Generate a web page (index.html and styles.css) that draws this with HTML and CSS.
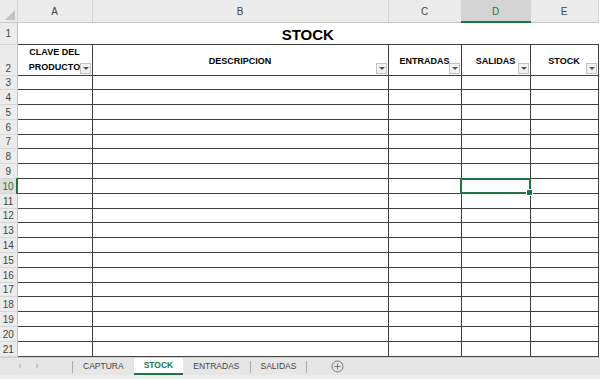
FILE: index.html
```html
<!DOCTYPE html>
<html lang="es">
<head>
    <meta charset="UTF-8">
    <title>STOCK</title>
    <link rel="stylesheet" href="styles.css">
</head>
<body>
<div class="sheet">
    <table class="grid">
        <colgroup>
            <col class="c-rh">
            <col class="c-a">
            <col class="c-b">
            <col class="c-c">
            <col class="c-d">
            <col class="c-e">
        </colgroup>
        <tr class="r-head">
            <th class="corner"><i></i></th>
            <th>A</th>
            <th>B</th>
            <th>C</th>
            <th class="sel">D</th>
            <th>E</th>
        </tr>
        <tr class="r-title">
            <th class="rh">1</th>
            <td colspan="5" class="title">STOCK</td>
        </tr>
        <tr class="r-cols">
            <th class="rh">2</th>
            <td class="hd two"><span>CLAVE DEL<br>PRODUCTO</span><i class="flt"></i></td>
            <td class="hd"><span>DESCRIPCION</span><i class="flt"></i></td>
            <td class="hd"><span>ENTRADAS</span><i class="flt"></i></td>
            <td class="hd"><span>SALIDAS</span><i class="flt"></i></td>
            <td class="hd"><span>STOCK</span><i class="flt"></i></td>
        </tr>
        <tr><th class="rh">3</th><td></td><td></td><td></td><td></td><td></td></tr>
        <tr><th class="rh">4</th><td></td><td></td><td></td><td></td><td></td></tr>
        <tr><th class="rh">5</th><td></td><td></td><td></td><td></td><td></td></tr>
        <tr><th class="rh">6</th><td></td><td></td><td></td><td></td><td></td></tr>
        <tr><th class="rh">7</th><td></td><td></td><td></td><td></td><td></td></tr>
        <tr><th class="rh">8</th><td></td><td></td><td></td><td></td><td></td></tr>
        <tr><th class="rh">9</th><td></td><td></td><td></td><td></td><td></td></tr>
        <tr><th class="rh sel">10</th><td></td><td></td><td></td><td class="active"></td><td></td></tr>
        <tr><th class="rh">11</th><td></td><td></td><td></td><td></td><td></td></tr>
        <tr><th class="rh">12</th><td></td><td></td><td></td><td></td><td></td></tr>
        <tr><th class="rh">13</th><td></td><td></td><td></td><td></td><td></td></tr>
        <tr><th class="rh">14</th><td></td><td></td><td></td><td></td><td></td></tr>
        <tr><th class="rh">15</th><td></td><td></td><td></td><td></td><td></td></tr>
        <tr><th class="rh">16</th><td></td><td></td><td></td><td></td><td></td></tr>
        <tr><th class="rh">17</th><td></td><td></td><td></td><td></td><td></td></tr>
        <tr><th class="rh">18</th><td></td><td></td><td></td><td></td><td></td></tr>
        <tr><th class="rh">19</th><td></td><td></td><td></td><td></td><td></td></tr>
        <tr><th class="rh">20</th><td></td><td></td><td></td><td></td><td></td></tr>
        <tr><th class="rh">21</th><td></td><td></td><td></td><td></td><td></td></tr>
    </table>

    <div class="tabs">
        <div class="nav"><i class="arr-l"></i><i class="arr-r"></i></div>
        <span class="sep"></span>
        <span class="tab">CAPTURA</span>
        <span class="tab on">STOCK</span>
        <span class="tab">ENTRADAS</span>
        <span class="sep"></span>
        <span class="tab">SALIDAS</span>
        <span class="sep"></span>
        <svg class="add" width="13" height="13" viewBox="0 0 13 13">
            <circle cx="6.5" cy="6.5" r="5.5" fill="none" stroke="#777" stroke-width="1"/>
            <path d="M6.5 3.5v6M3.5 6.5h6" stroke="#777" stroke-width="1"/>
        </svg>
    </div>
</div>
</body>
</html>
```

FILE: styles.css
```css
*{
    padding: 0;
    margin: 0;
    box-sizing: border-box;
}
body{
    width: 600px;
    height: 379px;
    overflow: hidden;
    background: #fff;
    font-family: "Liberation Sans", Arial, sans-serif;
}
.sheet{
    display: flex;
    flex-direction: column;
    height: 379px;
}

/* grid */
.grid{
    border-collapse: collapse;
    table-layout: fixed;
    width: 598px;
}
.c-rh{ width: 17px; }
.c-a{ width: 75px; }
.c-b{ width: 296px; }
.c-c{ width: 73px; }
.c-d{ width: 69px; }
.c-e{ width: 68px; }

.grid tr{ height: 14.8px; }
.grid .r-head{ height: 22px; }
.grid .r-title{ height: 22px; }
.grid .r-cols{ height: 30px; }

.r-head th{
    background: #ececec;
    color: #444;
    font-size: 10px;
    font-weight: normal;
    border-right: 1px solid #d4d4d4;
    border-bottom: 1px solid #c8c8c8;
    padding-top: 2px;
}
.r-head th.sel{
    background: #d4d4d4;
    color: #217346;
    border-bottom: 2px solid #217346;
}
.corner{
    position: relative;
}
.corner i{
    position: absolute;
    right: 2px;
    bottom: 2px;
    border-left: 10px solid transparent;
    border-bottom: 10px solid #c4c4c4;
}

.rh{
    background: #ececec;
    color: #444;
    font-size: 10px;
    font-weight: normal;
    text-align: center;
    vertical-align: bottom;
    line-height: 13px;
    border-right: 1px solid #c6c6c6;
    border-bottom: 1px solid #d6d6d6;
}
.r-title .rh{
    vertical-align: middle;
}
.rh.sel{
    background: #dedede;
    color: #217346;
    border-right: 2px solid #217346;
}

.grid td{
    border: 1px solid #404040;
}
.grid td.title{
    border: none;
    text-align: center;
    font-size: 15px;
    font-weight: bold;
    color: #000;
    padding-top: 3px;
}
.grid td.hd{
    position: relative;
    text-align: center;
    font-size: 9px;
    font-weight: bold;
    color: #000;
    line-height: 15px;
    padding-top: 3px;
}
.grid td.hd.two{
    padding-top: 0;
}
.flt{
    position: absolute;
    right: 1px;
    bottom: 1px;
    width: 11px;
    height: 11px;
    background: #f2f2f2;
    border: 1px solid #c2c2c2;
}
.flt::after{
    content: "";
    position: absolute;
    left: 2px;
    top: 3px;
    border-left: 3px solid transparent;
    border-right: 3px solid transparent;
    border-top: 3px solid #555;
}

.grid td.active{
    position: relative;
    outline: 2px solid #217346;
    outline-offset: -1px;
}
.grid td.active::after{
    content: "";
    position: absolute;
    right: -3px;
    bottom: -3px;
    width: 5px;
    height: 5px;
    background: #217346;
    border: 1px solid #fff;
}

/* sheet tabs */
.tabs{
    flex: 1;
    display: flex;
    align-items: stretch;
    background: #e6e6e6;
    border-top: 1px solid #d2d2d2;
    border-bottom: 4px solid #ededed;
    font-size: 8.5px;
    color: #444;
}
.nav{
    width: 72px;
    display: flex;
    align-items: center;
    gap: 15px;
    padding-left: 18px;
}
.arr-l{
    border-top: 3px solid transparent;
    border-bottom: 3px solid transparent;
    border-right: 3px solid #c4c4c4;
}
.arr-r{
    border-top: 3px solid transparent;
    border-bottom: 3px solid transparent;
    border-left: 3px solid #c4c4c4;
}
.sep{
    width: 1px;
    background: #a8a8a8;
    margin: 3px 0 2px;
}
.tab{
    display: flex;
    align-items: center;
    padding: 0 10px;
}
.tab.on{
    background: #fff;
    color: #217346;
    font-weight: bold;
    border-bottom: 2px solid #217346;
    padding: 0 10px;
}
.add{
    align-self: center;
    margin-left: 24px;
}
```
